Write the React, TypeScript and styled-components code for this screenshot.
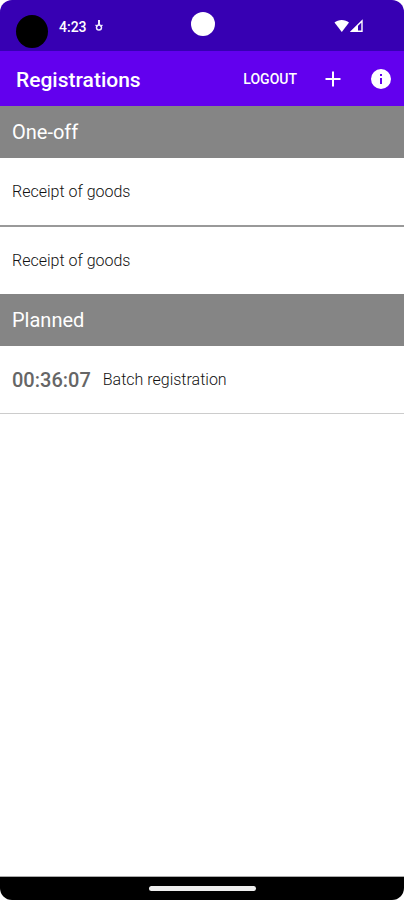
import React from "react";
import styled, { createGlobalStyle } from "styled-components";

const GlobalStyle = createGlobalStyle`
  * { box-sizing: border-box; }
  body { margin: 0; background: #fff; font-family: Roboto, sans-serif; }
`;

const Screen = styled.div`
  display: flex;
  flex-direction: column;
  min-height: 100vh;
  overflow: hidden;
  border-radius: 12px;
  background: #fff;
`;

const StatusBar = styled.div`
  display: grid;
  grid-template-columns: 1fr auto 1fr;
  align-items: start;
  height: 51px;
  padding: 12px 40px 0 16px;
  background: #3700b3;
  color: #fff;
`;

const StatusLeft = styled.div`
  display: flex;
  align-items: center;
  padding-top: 3px;
`;

const Puck = styled.span`
  width: 32px;
  height: 33px;
  margin-right: 11px;
  border-radius: 50%;
  background: #000;
`;

const Clock = styled.time`
  align-self: flex-start;
  margin-right: 7px;
  font-size: 14px;
  font-weight: 500;
  line-height: 24px;
`;

const StatusGlyph = styled.svg`
  display: block;
  align-self: flex-start;
  margin-top: 4px;
`;

const Camera = styled.span`
  width: 24px;
  height: 24px;
  margin-left: 26px;
  border-radius: 50%;
  background: #fff;
`;

const StatusRight = styled.div`
  display: flex;
  justify-content: flex-end;
  padding-top: 7px;
`;

const AppBar = styled.header`
  display: flex;
  align-items: center;
  height: 55px;
  padding: 0 11px 0 16px;
  background: #6200ee;
  color: #fff;
`;

const Title = styled.h1`
  flex: 1;
  margin: 0;
  padding-top: 2px;
  font-size: 21px;
  font-weight: 500;
  line-height: 24px;
`;

const Actions = styled.div`
  display: flex;
  align-items: center;
  gap: 24px;
`;

const BarButton = styled.button`
  display: flex;
  align-items: center;
  padding: 0;
  border: 0;
  background: none;
  color: inherit;
  font: 500 14px/24px Roboto, sans-serif;
  cursor: pointer;
`;

const SectionTitle = styled.h2`
  margin: 0;
  padding: 1px 12px 0;
  background: #858585;
  color: #fff;
  font-size: 20px;
  font-weight: 400;
  line-height: 51px;
`;

const List = styled.ul`
  margin: 0;
  padding: 0;
  list-style: none;
`;

const Row = styled.li<{ $divider?: string }>`
  display: flex;
  align-items: center;
  gap: 12px;
  box-sizing: content-box;
  min-height: 66px;
  padding: 1px 12px 0;
  border-bottom: ${(p) => p.$divider ?? "0"};
  color: #111;
  font-size: 16px;
  font-weight: 300;
  line-height: 24px;
`;

const Countdown = styled.time`
  color: #666;
  font-size: 20px;
  font-weight: 500;
`;

const NavBar = styled.footer`
  display: flex;
  align-items: center;
  justify-content: center;
  height: 24px;
  margin-top: auto;
  border-top: 1px solid #aaa;
  background: #000;
`;

const HomeHandle = styled.span`
  width: 107px;
  height: 5px;
  border-radius: 3px;
  background: #eee;
`;

export default function App() {
  return (
    <>
      <GlobalStyle />
      <Screen>
        <StatusBar>
          <StatusLeft>
            <Puck />
            <Clock>4:23</Clock>
            <StatusGlyph width="10" height="14" viewBox="0 0 10 14" fill="none" stroke="#efe9ff" aria-hidden="true">
              <path d="M5 1v5" strokeWidth="2" />
              <path d="M1.500 6l2 1.500M8.500 6l-2 1.500" strokeWidth="1.200" />
              <circle cx="5" cy="8.500" r="2.500" strokeWidth="1.400" />
            </StatusGlyph>
          </StatusLeft>
          <Camera />
          <StatusRight>
            <svg width="30" height="14" viewBox="0 0 30 14" aria-label="Wi-Fi and signal" role="img">
              <path d="M.5 3.500C4 0 11.500 0 15 3.500L7.800 13z" fill="#fff" />
              <path
                d="M17.500 12.300L28 2v10.300z"
                fill="none"
                stroke="#fff"
                strokeWidth="1.400"
              />
              <path d="M17 12.800L24 6v6.800z" fill="#fff" />
            </svg>
          </StatusRight>
        </StatusBar>
        <AppBar>
          <Title>Registrations</Title>
          <Actions>
            <BarButton type="button">LOGOUT</BarButton>
            <BarButton type="button" aria-label="Add">
              <svg width="24" height="24" viewBox="0 0 24 24" fill="currentColor">
                <path d="M19.500 13h-6.500v6.500h-2v-6.500H4.500v-2h6.500V4.500h2v6.500h6.500z" />
              </svg>
            </BarButton>
            <BarButton type="button" aria-label="Information">
              <svg width="24" height="24" viewBox="0 0 24 24" fill="currentColor">
                <path d="M12 2a10 10 0 1 0 0 20 10 10 0 0 0 0-20zm1 15h-2v-6h2zm0-8h-2V7h2z" />
              </svg>
            </BarButton>
          </Actions>
        </AppBar>
        <main>
          <SectionTitle>One-off</SectionTitle>
          <List>
            <Row $divider="2px solid #999">Receipt of goods</Row>
            <Row>Receipt of goods</Row>
          </List>
          <SectionTitle>Planned</SectionTitle>
          <List>
            <Row $divider="1px solid #ccc">
              <Countdown>00:36:07</Countdown>
              <span>Batch registration</span>
            </Row>
          </List>
        </main>
        <NavBar>
          <HomeHandle />
        </NavBar>
      </Screen>
    </>
  );
}
